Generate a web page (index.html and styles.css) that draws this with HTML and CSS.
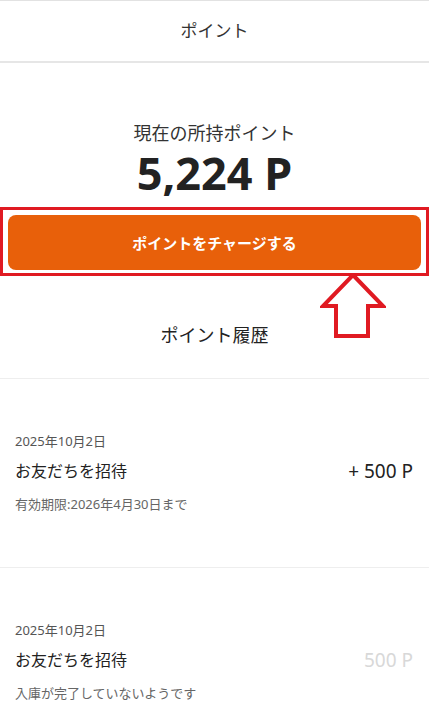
FILE: index.html
```html
<!DOCTYPE html>
<html lang="ja">

<head>
  <meta charset="UTF-8">
  <meta name="viewport" content="width=device-width, initial-scale=1.0">
  <title>ポイント</title>
  <link rel="stylesheet" href="styles.css">
</head>

<body>

  <!-- Header -->
  <header class="page-header">ポイント</header>

  <!-- Balance -->
  <section class="balance">
    <p class="balance-label">現在の所持ポイント</p>
    <p class="balance-value">5,224 P</p>
  </section>

  <!-- Charge button (highlighted) -->
  <div class="charge-frame">
    <button class="charge-button">ポイントをチャージする</button>
    <svg class="arrow" width="66" height="66" viewBox="0 0 66 66">
      <path d="M33 2 L63 33 L48 33 L48 63 L16 63 L16 33 L3 33 Z" fill="#fff" stroke="#e01a22" stroke-width="4" stroke-linejoin="miter" />
    </svg>
  </div>

  <h2 class="history-title">ポイント履歴</h2>

  <!-- History list -->
  <ul class="history">
    <li class="history-item">
      <div class="item-date">2025年10月2日</div>
      <div class="item-row">
        <span class="item-name">お友だちを招待</span>
        <span class="item-points">+ 500 P</span>
      </div>
      <div class="item-note">有効期限:2026年4月30日まで</div>
    </li>
    <li class="history-item">
      <div class="item-date">2025年10月2日</div>
      <div class="item-row">
        <span class="item-name">お友だちを招待</span>
        <span class="item-points pending">500 P</span>
      </div>
      <div class="item-note">入庫が完了していないようです</div>
    </li>
  </ul>

</body>

</html>
```

FILE: styles.css
```css
body {
  margin: 0;
  background-color: #fff;
  color: #222;
  font-family: "Noto Sans", "Noto Sans CJK JP", sans-serif;
  border-top: 1px solid #e2e2e2;
  overflow: hidden;
  height: 702px;
}

.page-header {
  height: 60px;
  line-height: 60px;
  text-align: center;
  font-size: 17px;
  color: #333;
  border-bottom: 2px solid #e6e6e6;
}

/* Balance */
.balance {
  text-align: center;
  padding-top: 57px;
}

.balance-label {
  margin: 0;
  font-size: 18px;
  line-height: 26px;
  color: #333;
}

.balance-value {
  margin: 0;
  font-size: 45px;
  font-weight: 700;
  line-height: 54px;
  color: #222;
}

/* Charge button */
.charge-frame {
  position: relative;
  margin-top: 7px;
  height: 69px;
  border: 3px solid #e01a22;
  padding: 5px 5px 3px;
  box-sizing: border-box;
}

.charge-button {
  display: block;
  width: 100%;
  height: 100%;
  background-color: #e8600a;
  color: #fff;
  border: none;
  border-radius: 8px;
  font-family: inherit;
  font-size: 15px;
  font-weight: 700;
  cursor: pointer;
}

.arrow {
  position: absolute;
  left: 317px;
  top: 63px;
}

.history-title {
  margin: 0;
  padding-top: 46px;
  padding-bottom: 30px;
  text-align: center;
  font-size: 18px;
  font-weight: 400;
  line-height: 26px;
  color: #222;
}

/* History list */
.history {
  list-style: none;
  margin: 0;
  padding: 0;
  border-top: 1px solid #eee;
}

.history-item {
  padding: 52px 16px 53px 15px;
  border-bottom: 1px solid #eee;
}

.item-date {
  font-size: 13px;
  line-height: 20px;
  color: #555;
}

.item-row {
  display: flex;
  justify-content: space-between;
  align-items: center;
  margin-top: 7px;
}

.item-name {
  font-size: 16px;
  line-height: 24px;
  color: #222;
}

.item-points {
  font-size: 19px;
  color: #222;
}

.item-points.pending {
  color: #d8d8d8;
}

.item-note {
  margin-top: 10px;
  font-size: 13px;
  line-height: 20px;
  color: #666;
}
```
